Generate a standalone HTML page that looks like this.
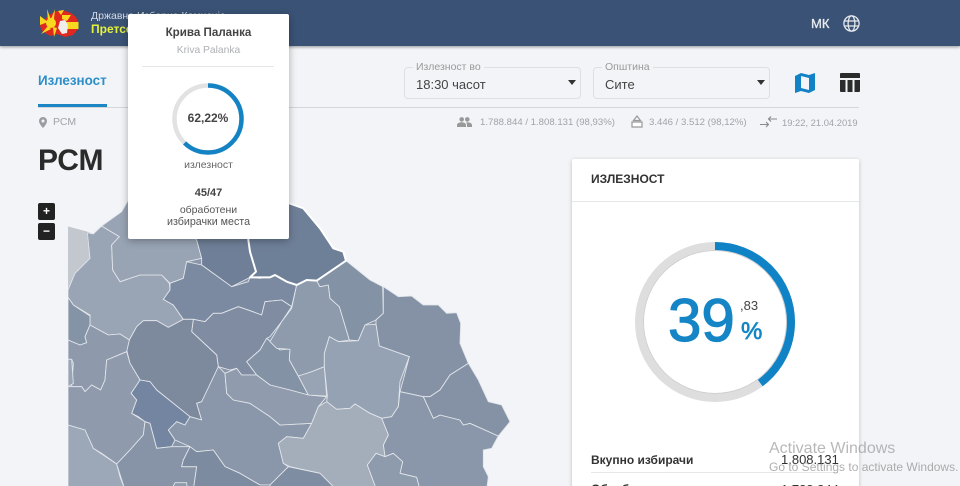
<!DOCTYPE html>
<html lang="mk"><head><meta charset="utf-8"><title>РСМ</title>
<style>
*{box-sizing:border-box}
html,body{margin:0;padding:0;width:960px;height:486px;overflow:hidden}
#w{position:absolute;left:0;top:0;width:960px;height:486px;overflow:hidden;background:#f2f4f7;font-family:"Liberation Sans",sans-serif;color:#333}
.a{position:absolute;white-space:nowrap}
.hdr{left:0;top:0;width:960px;height:46px;background:#3a5275;box-shadow:0 1px 3px rgba(0,0,0,.4)}
.sel{height:32px;width:177px;top:67px;border:1px solid #dcdfe3;border-radius:4px}
.leg{top:61px;font-size:10.5px;color:#9a9a9a;background:#f2f4f7;padding:0 3px}
.val{top:77px;font-size:13px;color:#444}
.car{top:80px;width:0;height:0;border-left:4px solid transparent;border-right:4px solid transparent;border-top:5px solid #333}
.st{top:117px;font-size:9.6px;color:#a0a3a8}
.zb{left:38px;width:17px;height:17px;background:#222;border-radius:2px;color:#fff;font-size:12px;font-weight:bold;text-align:center;line-height:16px}
.map polygon{stroke:#e3e6eb;stroke-width:2.6;stroke-linejoin:round}
</style></head><body><div id="w">

<svg class="a map" style="left:0;top:0" width="960" height="486" viewBox="0 0 960 486">
<defs><clipPath id="c"><rect x="68" y="190" width="500" height="296"/></clipPath></defs>
<g clip-path="url(#c)"><g transform="translate(30,190) scale(.33333)">
<polygon fill="#8a97aa" style="stroke:none" points="114,110 170,125 190,132 215,108 275,65 295,30 778,40 820,55 870,115 910,175 940,185 948,212 1020,270 1058,290 1105,320 1145,318 1180,345 1225,345 1250,370 1280,368 1292,400 1290,460 1315,520 1345,570 1375,635 1415,645 1440,695 1405,738 1385,775 1360,780 1360,830 1375,860 1370,900 114,900"/>
<polygon fill="#c3c8ce" style="stroke:none" points="114,110 170,125 180,205 135,250 114,300"/>
<polygon fill="#99a5b5" points="172,128 190,132 215,108 268,140 245,165 248,240 270,275 330,255 395,255 418,280 420,300 400,328 430,345 460,388 415,412 380,392 340,392 320,410 298,450 270,432 235,435 180,405 180,375 130,345 114,322 114,300 135,250 180,205"/>
<polygon fill="#98a4b4" points="215,108 275,65 295,30 500,30 500,150 515,205 470,215 460,265 420,280 395,255 330,255 270,275 248,240 245,165 268,140"/>
<polygon fill="#6f7f97" points="400,30 650,30 655,150 660,185 678,245 660,262 605,290 515,225 515,205 500,150"/>
<polygon fill="#7b8aa0" points="420,280 460,265 470,215 515,225 605,290 655,275 660,262 690,265 735,255 750,265 770,275 800,285 785,350 755,330 705,335 695,375 660,362 625,350 575,370 550,370 525,395 490,388 460,388 430,345 400,328 420,300"/>
<polygon fill="#7f8ca1" points="490,388 525,395 550,370 575,370 625,350 660,362 695,375 705,335 755,330 785,350 755,395 720,440 710,445 690,480 650,515 680,555 635,555 620,535 600,540 565,530 560,495 485,425"/>
<polygon fill="#7d8a9e" points="340,392 380,392 415,412 460,388 490,388 485,425 560,495 565,530 550,580 515,635 500,640 515,690 480,680 380,600 360,575 330,570 300,520 290,480 298,450 320,410"/>
<polygon fill="#7385a0" points="330,570 360,575 380,600 480,680 465,705 440,695 415,720 435,750 425,770 380,775 360,700 345,695 325,680 305,670 320,630 303,610"/>
<polygon fill="#8593a6" points="114,322 130,345 180,378 180,405 165,440 170,458 150,465 114,450"/>
<polygon fill="#8e9aac" points="180,405 235,435 270,432 298,450 290,485 230,510 225,570 212,600 185,585 165,605 155,590 125,590 130,520 125,508 114,508 114,450 150,465 170,458 165,440"/>
<polygon fill="#99a5b5" points="114,508 125,508 130,580 114,590"/>
<polygon fill="#8f9bad" points="114,590 125,590 155,590 165,605 185,585 212,600 225,570 230,510 290,485 300,520 330,570 303,610 320,630 305,670 345,695 340,735 300,780 260,822 215,790 190,775 165,720 114,705"/>
<polygon fill="#9ca8b8" points="114,705 165,720 190,775 260,822 270,860 285,900 114,900"/>
<polygon fill="#8794a8" points="345,695 360,700 380,775 425,770 480,770 460,810 455,830 500,830 490,900 285,900 260,822 300,780 340,735"/>
<polygon fill="#8a97aa" points="435,750 415,720 440,695 465,705 480,680 515,690 500,640 515,635 565,530 585,550 590,610 610,630 660,640 720,680 750,705 845,700 820,745 770,740 745,760 760,820 775,830 720,885 690,885 630,850 585,830 550,780 500,785 480,770"/>
<polygon fill="#7d8ba1" points="460,810 480,770 500,785 550,780 585,830 630,850 690,885 720,885 720,900 490,900 500,830 455,830"/>
<polygon fill="#8492a6" points="650,515 690,480 710,445 750,480 780,477 778,510 805,558 835,615 780,600 720,585 680,555"/>
<polygon fill="#909cae" points="585,550 620,535 635,555 680,555 720,585 780,600 835,615 890,620 865,650 845,700 750,705 720,680 660,640 610,630 590,610"/>
<polygon fill="#8e9bad" points="430,888 435,878 470,878 472,900 430,900"/>
<g transform="translate(720,0)">
<polygon fill="#8e9bad" points="80,285 110,270 140,272 150,290 175,285 180,325 208,350 238,450 205,455 178,440 163,490 163,530 125,550 85,558 58,510 60,478 20,475 0,455 35,395 65,355"/>
<polygon fill="#98a4b4" points="85,558 125,545 163,530 170,618 115,615"/>
<polygon fill="#8492a6" points="140,272 228,212 300,270 338,290 340,370 318,390 285,405 265,452 238,450 208,350 180,325 175,285 150,290"/>
<polygon fill="#8592a6" style="stroke-opacity:1" points="340,290 385,320 425,318 460,345 505,345 530,370 560,368 572,400 570,460 595,520 540,555 510,600 480,620 460,620 390,605 405,550 418,500 328,468 318,403 318,390 340,370"/>
<polygon fill="#95a2b3" points="178,440 205,455 265,452 285,405 318,403 328,468 418,500 390,575 385,650 365,680 335,685 300,670 255,642 240,655 200,658 170,635 172,618 163,530 163,490"/>
<polygon fill="#8a97aa" points="390,605 460,620 490,685 510,675 570,690 580,705 600,700 685,738 665,775 640,780 640,830 655,860 650,900 450,900 440,862 390,850 398,815 370,790 345,800 340,765 355,735 335,685 365,680 385,650"/>
<polygon fill="#8592a6" points="460,620 480,620 510,600 540,555 595,520 625,570 655,635 695,645 720,695 685,738 600,700 580,705 570,690 510,675 490,685"/>
<polygon fill="#a4adba" points="170,635 200,658 240,655 255,642 300,670 335,685 355,735 340,765 345,800 318,790 292,825 320,900 200,900 150,850 60,830 40,820 25,760 50,740 100,745 125,700 145,650"/>
<polygon fill="#8e9bad" points="318,790 345,800 370,790 398,815 390,850 440,862 450,900 320,900 292,825"/>
<polygon fill="#7f8da2" points="55,830 150,850 200,900 0,900 0,885"/>
<polygon fill="#6e7f98" style="stroke:#fff;stroke-width:6" points="-70,30 58,40 100,55 150,115 190,175 220,185 228,212 140,272 110,270 80,285 50,275 15,255 0,262 -30,262 -60,262 -42,245 -60,185 -65,150"/>
</g>
</g></g>
</svg>

<div class="a hdr"></div>
<svg class="a" style="left:40px;top:9px" width="39" height="29" viewBox="0 0 39 29">
<path d="M3 12 8 7 14 3 22 1 31 4 36 8 38 13 38 20 33 26 25 28 17 25 10 27 2 22 0 17Z" fill="#e0281f"/>
<path d="M7 0 11 11 8 12ZM15 0 14 10 11 10ZM0 7 8 13 0 16ZM1 25 8 17 11 20ZM14 28 13 18 17 19ZM18 2 24 1 21 6ZM24 13H38.500V20H24ZM22 6 31 6 27 12 22 10Z" fill="#f7d81e"/>
<circle cx="11" cy="14" r="5" fill="#f7d81e"/>
<path d="M20 12 25 11 28 16 27 24 22 25 18 19Z" fill="#f0eded"/>
</svg>
<div class="a" style="left:91px;top:10px;font-size:10.5px;color:#d5dbe4">Државна Изборна Комисија</div>
<div class="a" style="left:91px;top:22px;font-size:12px;font-weight:bold;color:#e5f23c">Претседателски избори</div>
<div class="a" style="left:811px;top:16px;font-size:13px;color:#e9ecf0;-webkit-text-stroke:.3px #e9ecf0">МК</div>
<svg class="a" style="left:843px;top:15px" width="17" height="17" viewBox="0 0 17 17" fill="none" stroke="#e6e9ee" stroke-width="1.3"><circle cx="8.5" cy="8.5" r="7.6"/><ellipse cx="8.5" cy="8.5" rx="3.4" ry="7.6"/><path d="M1.3 6H15.7M1.3 11H15.7"/></svg>

<div class="a" style="left:38px;top:107px;width:821px;height:1px;background:#d4d6da"></div>
<div class="a" style="left:38px;top:73px;font-size:13.4px;font-weight:bold;color:#2d8ec8">Излезност</div>
<div class="a" style="left:38px;top:104px;width:69px;height:3px;background:#1c86c5"></div>

<div class="a sel" style="left:404px"></div>
<div class="a leg" style="left:413px">Излезност во</div>
<div class="a val" style="left:416px">18:30 часот</div>
<div class="a car" style="left:568px"></div>
<div class="a sel" style="left:593px"></div>
<div class="a leg" style="left:602px">Општина</div>
<div class="a val" style="left:605px">Сите</div>
<div class="a car" style="left:757px"></div>
<svg class="a" style="left:795px;top:73px" width="20" height="20" viewBox="0 0 20 20"><path d="M0 3 6 0 14 2 20 0V17L14 20 6 18 0 20ZM6 3V15L14 17V5Z" fill="#1082c5" fill-rule="evenodd"/></svg>
<svg class="a" style="left:840px;top:73px" width="20" height="19" viewBox="0 0 20 19"><path d="M1 0H19Q20 0 20 1V5H0V1Q0 0 1 0ZM0 7H5.500V19H1Q0 19 0 18ZM7.500 7H12.500V19H7.500ZM14.500 7H20V18Q20 19 19 19H14.500Z" fill="#2b2b2b"/></svg>

<svg class="a" style="left:39px;top:117px" width="8" height="11" viewBox="0 0 8 11"><path d="M4 0A4 4 0 0 0 0 4C0 7 4 11 4 11S8 7 8 4A4 4 0 0 0 4 0ZM4 5.500A1.500 1.500 0 1 1 4 2.500 1.500 1.500 0 0 1 4 5.500Z" fill="#9a9da2" fill-rule="evenodd"/></svg>
<div class="a st" style="left:53px;font-size:10.5px;top:116px">РСМ</div>
<svg class="a" style="left:457px;top:117px" width="15" height="10" viewBox="0 0 15 10"><circle cx="4.700" cy="2.400" r="2.300" fill="#999"/><circle cx="10.300" cy="2.400" r="2.300" fill="#999"/><path d="M0 10V8C0 6 3 5.300 4.700 5.300S9 6 9 8V10ZM10 10V8C10 7 9.600 6.200 9 5.600 11.500 5 15 6 15 8V10Z" fill="#999"/></svg>
<div class="a st" style="left:480px">1.788.844 / 1.808.131 (98,93%)</div>
<svg class="a" style="left:631px;top:115px" width="12" height="13" viewBox="0 0 12 13" fill="none" stroke="#999" stroke-width="1.2"><path d="M6 1 9.500 5.500H2.500Z"/><path d="M1 7H11V12H1Z" fill="#fff"/></svg>
<div class="a st" style="left:649px">3.446 / 3.512 (98,12%)</div>
<svg class="a" style="left:760px;top:116px" width="17" height="12" viewBox="0 0 17 12" fill="none" stroke="#888" stroke-width="1.1"><path d="M0 8.500H8M6 6 8.500 8.500 6 11M17 3H9M11 .5 8.500 3 11 5.500"/></svg>
<div class="a st" style="left:782px;font-size:9.4px">19:22, 21.04.2019</div>

<div class="a" style="left:38px;top:144px;font-size:30px;font-weight:bold;color:#2b2b2b;line-height:34px">РСМ</div>
<div class="a zb" style="top:203px">+</div>
<div class="a zb" style="top:223px">−</div>

<div class="a" style="left:572px;top:159px;width:287px;height:340px;background:#fff;border-radius:2px;box-shadow:0 1px 4px rgba(0,0,0,.22)"></div>
<div class="a" style="left:572px;top:201px;width:287px;height:1px;background:#e6e7e9"></div>
<div class="a" style="left:591px;top:172px;font-size:12px;font-weight:bold;color:#333">ИЗЛЕЗНОСТ</div>
<svg class="a" style="left:632px;top:239px" width="166" height="166" viewBox="0 0 166 166" fill="none">
<circle cx="83" cy="83" r="76" stroke="#dedede" stroke-width="8"/>
<circle cx="83" cy="83" r="71.500" stroke="#cfcfcf" stroke-width="1"/>
<circle cx="83" cy="83" r="76" stroke="#0f83c5" stroke-width="8" stroke-dasharray="190.200 477.600" transform="rotate(-90 83 83)"/>
</svg>
<div class="a" style="left:668px;top:286px;font-size:60px;color:#1585c6;line-height:70px;-webkit-text-stroke:1.2px #1585c6">39</div>
<div class="a" style="left:740px;top:298px;font-size:13px;color:#444">,83</div>
<div class="a" style="left:741px;top:317px;font-size:24px;color:#1585c6;line-height:30px;-webkit-text-stroke:.7px #1585c6">%</div>
<div class="a" style="left:591px;top:453px;font-size:12px;font-weight:bold;color:#333">Вкупно избирачи</div>
<div class="a" style="left:781px;top:452px;font-size:13px;color:#333">1.808.131</div>
<div class="a" style="left:591px;top:472px;width:247px;height:1px;background:#e6e7e9"></div>
<div class="a" style="left:591px;top:482px;font-size:12px;font-weight:bold;color:#333">Обработени</div>
<div class="a" style="left:781px;top:482px;font-size:13px;color:#333">1.788.844</div>
<div class="a" style="left:769px;top:440px;font-size:16px;color:rgba(140,140,140,.62)">Activate Windows</div>
<div class="a" style="left:769px;top:460px;font-size:12px;color:rgba(140,140,140,.7)">Go to Settings to activate Windows.</div>

<div class="a" style="left:128px;top:14px;width:161px;height:225px;background:#fff;border-radius:2px;box-shadow:0 2px 8px rgba(0,0,0,.3)"></div>
<div class="a" style="left:128px;top:26px;width:161px;text-align:center;font-size:11.6px;font-weight:bold;color:#444">Крива Паланка</div>
<div class="a" style="left:128px;top:45px;width:161px;text-align:center;font-size:10.3px;color:#aeb0b3">Kriva Palanka</div>
<div class="a" style="left:142px;top:66px;width:132px;height:1px;background:#e4e5e7"></div>
<svg class="a" style="left:172px;top:83px" width="72" height="72" viewBox="0 0 72 72" fill="none">
<circle cx="36" cy="36" r="33.500" stroke="#e2e2e2" stroke-width="4.500"/>
<circle cx="36" cy="36" r="33.500" stroke="#1383c4" stroke-width="4.500" stroke-dasharray="131 210.500" transform="rotate(-90 36 36)"/>
</svg>
<div class="a" style="left:172px;top:111px;width:72px;text-align:center;font-size:12px;font-weight:bold;color:#444">62,22%</div>
<div class="a" style="left:128px;top:159px;width:161px;text-align:center;font-size:10.500px;color:#666">излезност</div>
<div class="a" style="left:128px;top:187px;width:161px;text-align:center;font-size:11px;font-weight:bold;color:#444">45/47</div>
<div class="a" style="left:128px;top:204px;width:161px;text-align:center;font-size:10.500px;color:#555">обработени</div>
<div class="a" style="left:128px;top:216px;width:161px;text-align:center;font-size:10.700px;color:#555">избирачки места</div>
</div></body></html>
